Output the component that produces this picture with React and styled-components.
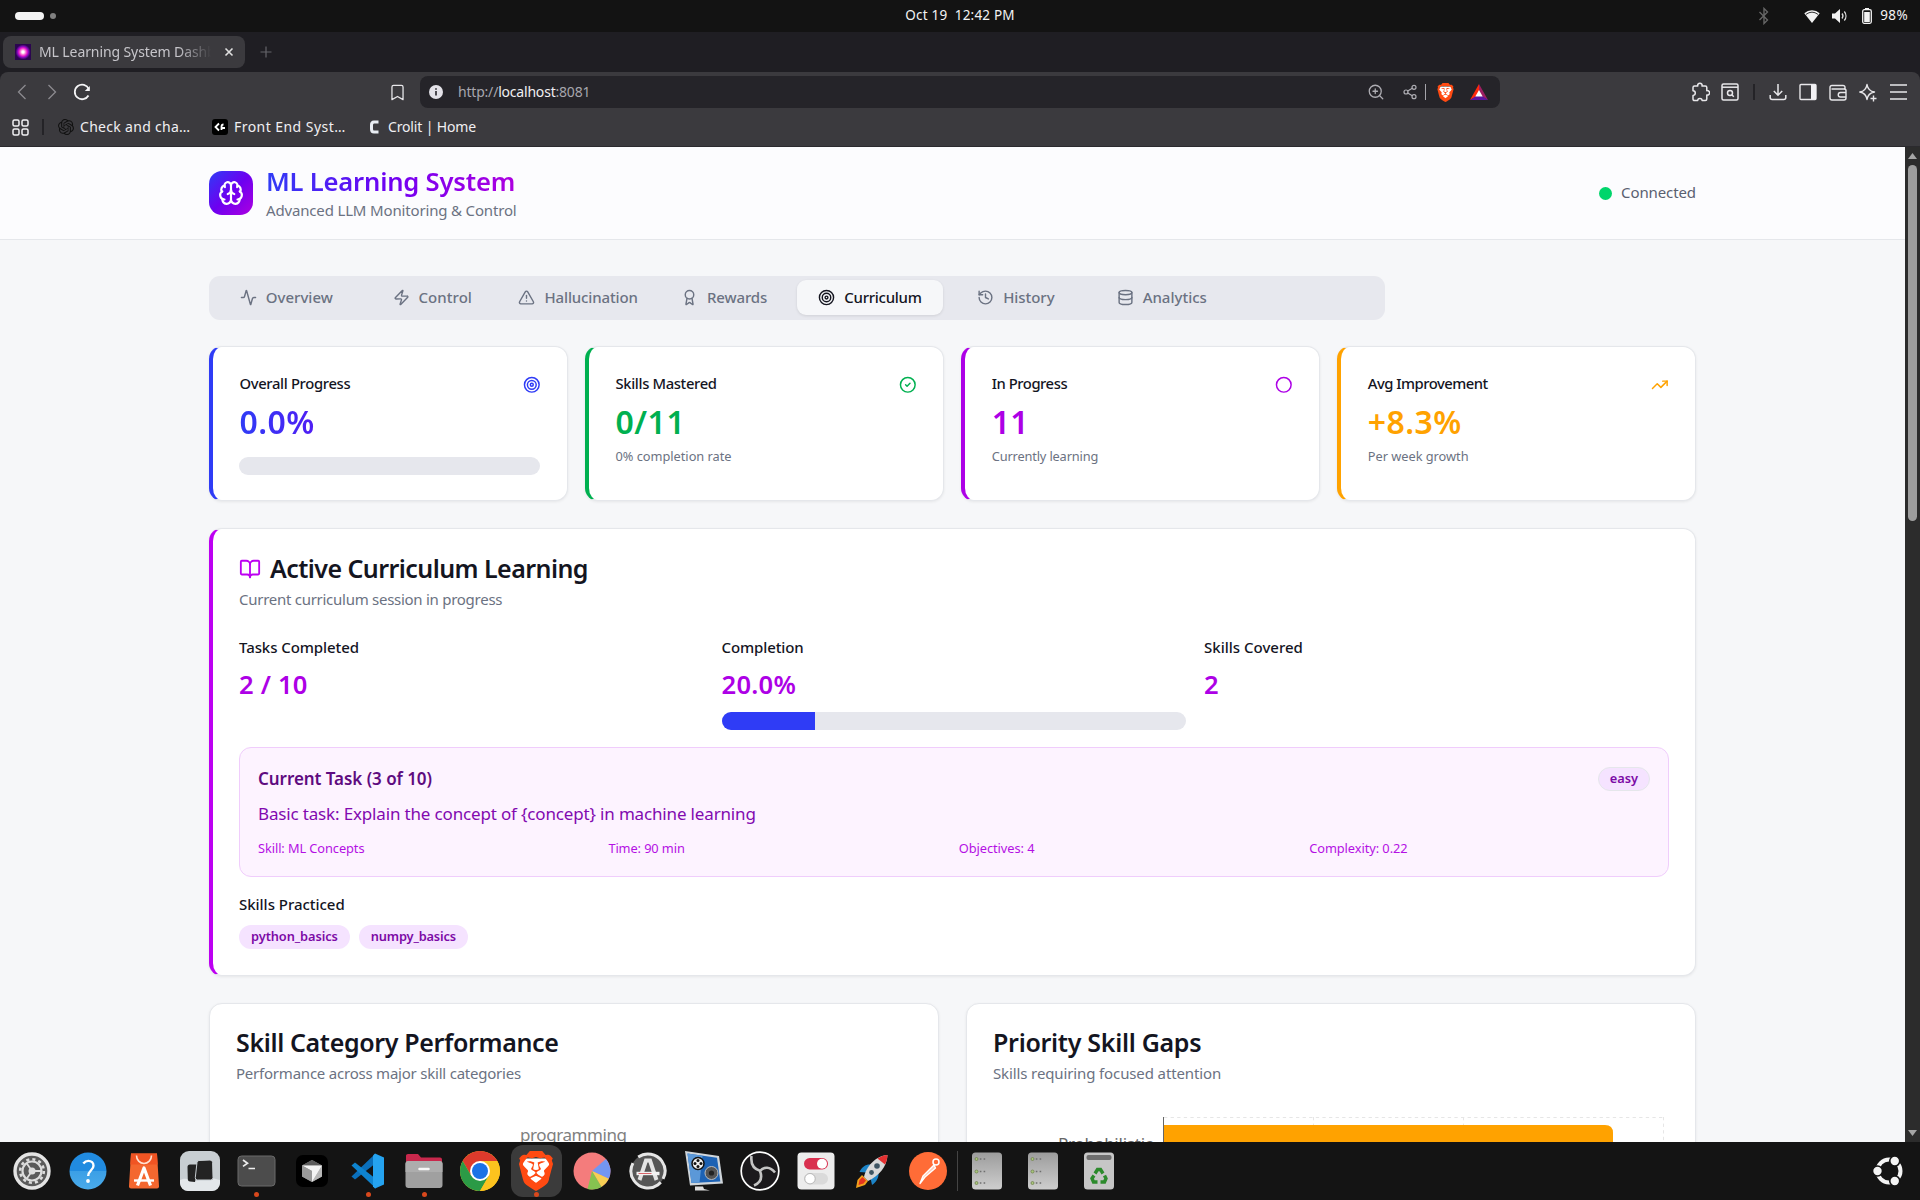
import React from "react";
import styled, { createGlobalStyle, css } from "styled-components";
import {
  Activity, Zap, TriangleAlert, Award, Target, History, Database, CircleCheck, Circle,
  TrendingUp, BookOpen, Brain, Bookmark, ZoomIn, Share2,
} from "lucide-react";
import { SiBrave, SiOpenai } from "react-icons/si";

const c = {
  ink: "#14151f", muted: "#6b7282", line: "#e5e7eb", track: "#e6e7ed", page: "#f6f7f9",
  blue: "#2f3cf6", green: "#00b050", purple: "#ad00e6", fuchsia: "#bd00f2", orange: "#ffa200",
  purple700: "#8209b0", purple900: "#5f0b80", chrome: "#3b3a3e",
};

const Global = createGlobalStyle`
  *, *::before, *::after { box-sizing: border-box; }
  body { margin: 0; overflow: hidden; background: #141414; }
  svg { display: block; flex: none; }
`;

const Screen = styled.div`
  width: 1920px;
  height: 1200px;
  display: flex;
  flex-direction: column;
  overflow: hidden;
  font-family: "Noto Sans", "Open Sans", sans-serif;
  color: ${c.ink};
`;

const Row = styled.div`
  display: flex;
  align-items: center;
`;

const Text = styled.span`
  display: block;
  width: fit-content;
  margin: ${(p) => -(p.$up ?? 1)}px 0 ${(p) => p.$up ?? 1}px;
  white-space: pre;
  font-size: ${(p) => p.$size || 15}px;
  line-height: ${(p) => p.$lh || 22}px;
  font-weight: ${(p) => p.$weight || 400};
  letter-spacing: ${(p) => p.$ls || 0}px;
  color: ${(p) => p.$color || "inherit"};
`;
const Heading = styled(Text).attrs({ $size: 25, $lh: 32, $weight: 600, $up: 1, $color: c.ink })``;
const Small = styled(Text).attrs({ $size: 12.8, $lh: 18 })``;

/* ---------- desktop top bar ---------- */
const TopBar = styled.header`
  height: 32px;
  flex: none;
  display: grid;
  grid-template-columns: 1fr auto 1fr;
  align-items: center;
  background: #131313;
  color: #f2f2f2;
`;
const Workspaces = styled(Row)`
  gap: 6px;
  padding-left: 15px;
  &::before { content: ""; width: 29px; height: 8px; border-radius: 4px; background: #f4f4f4; }
  &::after { content: ""; width: 6px; height: 6px; border-radius: 3px; background: #808080; }
`;
const Tray = styled(Row)`
  justify-content: flex-end;
  padding-right: 12px;
`;
const TrayIcon = styled.span`
  display: flex;
  justify-content: center;
  width: ${(p) => p.$w || 28}px;
  margin-right: ${(p) => p.$after || 0}px;
`;

/* ---------- browser chrome ---------- */
const TabStrip = styled(Row)`
  height: 40px;
  flex: none;
  padding-left: 3px;
  background: #1f1e23;
`;
const BrowserTab = styled(Row)`
  width: 242px;
  height: 32px;
  padding: 0 10px 0 12px;
  border-radius: 8px;
  background: ${c.chrome};
  color: #c6c5ca;
`;
const TabTitle = styled.div`
  width: 174px;
  margin: 0 11px 0 8px;
  overflow: hidden;
  mask-image: linear-gradient(to right, #000 80%, transparent 99%);
`;
const Favicon = styled.span`
  width: 16px;
  height: 16px;
  flex: none;
  background: radial-gradient(circle, #fff 0 10%, #f9d 20%, #e011c8 38%, #8a0abf 48%, #2b0550 66%);
`;
const ChromeArea = styled.div`
  flex: none;
  height: 75px;
  background: #1f1e23;
`;
const ChromePanel = styled.div`
  height: 75px;
  border-radius: 8px 8px 0 0;
  border-bottom: 1px solid #2b2a2e;
  background: ${c.chrome};
`;
const Toolbar = styled(Row)`
  height: 40px;
  padding: 0 7px;
  color: #e8e7ea;
`;
const Slot = styled.span`
  width: ${(p) => p.$w || 30}px;
  height: 32px;
  flex: none;
  display: flex;
  align-items: center;
  justify-content: center;
  color: ${(p) => p.$color || "inherit"};
  margin-left: ${(p) => p.$before || 0}px;
`;
const Divider = styled.span`
  width: ${(p) => p.$w || 2}px;
  height: 16px;
  background: ${(p) => p.$color || "#242327"};
`;
const Address = styled(Row)`
  width: 1080px;
  height: 32px;
  margin-left: 8px;
  padding: 0 6px 0 1px;
  border-radius: 8px;
  background: #252429;
`;
const Url = styled.span`
  margin-left: 7px;
  flex: 1;
  color: #a7a6ad;
  b { font-weight: 400; color: #f0eff2; }
`;
const BookmarkBar = styled(Row)`
  height: 30px;
  padding-left: 5px;
  color: #f0eff2;
`;
const BookmarkItem = styled(Row)`
  gap: 6px;
  width: ${(p) => p.$w}px;
`;
const BookmarkLabel = styled(Text).attrs({ $size: 14, $up: 0 })``;

/* ---------- page ---------- */
const Viewport = styled.div`
  height: 995px;
  flex: none;
  display: flex;
  overflow: hidden;
`;
const Page = styled.div`
  width: 1905px;
  height: 995px;
  overflow: hidden;
  background: ${c.page};
`;
const PageHeader = styled.header`
  height: 93px;
  padding: 0 209px;
  display: flex;
  align-items: center;
  justify-content: space-between;
  border-bottom: 1px solid ${c.line};
  background: #fcfcfe;
`;
const Brand = styled(Row)`
  gap: 13px;
`;
const Logo = styled.div`
  width: 44px;
  height: 44px;
  border-radius: 13px;
  display: grid;
  place-items: center;
  color: #fff;
  background: linear-gradient(135deg, ${c.blue}, #6d00f0 50%, #ad00e0);
`;
const Stack = styled.div`
  display: flex;
  flex-direction: column;
  align-items: flex-start;
`;
const gradientText = css`
  background-clip: text;
  -webkit-background-clip: text;
  color: transparent;
`;
const BrandName = styled.div`
  height: 33px;
  background-image: linear-gradient(to right, ${c.blue}, #7000f2 50%, #ad00e0);
  ${gradientText}
`;
const Status = styled(Row)`
  gap: 9px;
  color: #596070;
  &::before { content: ""; width: 13px; height: 13px; border-radius: 50%; background: #00d56b; }
`;
const Main = styled.main`
  width: 1487px;
  margin: 36px auto 0;
  display: flex;
  flex-direction: column;
  gap: 27px;
`;
const TabList = styled.nav`
  width: 1176px;
  height: 44px;
  margin-bottom: -1px;
  padding: 4px 4.4px 5px;
  display: grid;
  grid-template-columns: repeat(8, 1fr);
  border-radius: 11px;
  background: #e7e8ee;
  color: ${c.muted};
`;
const TabItem = styled(Row)`
  justify-content: center;
  gap: 9px;
  border-radius: 9px;
  ${(p) => p.$active && css`
    background: ${c.page};
    color: ${c.ink};
    box-shadow: 0 1px 3px rgba(0, 0, 0, 0.1);
  `}
`;
const StatGrid = styled.section`
  display: grid;
  grid-template-columns: repeat(4, 1fr);
  gap: 17.6px;
`;
const Card = styled.article`
  display: flex;
  flex-direction: column;
  border: 1px solid ${c.line};
  border-radius: 13px;
  background: #fff;
  box-shadow: 0 1px 3px rgba(0, 0, 0, 0.07);
  ${(p) => p.$accent && css`border-left: 4px solid ${p.$accent};`}
`;
const StatCard = styled(Card)`
  height: 155px;
  padding: 27px 26.400px 0 26.400px;
`;
const StatHead = styled(Row)`
  height: 22px;
  justify-content: space-between;
  color: ${(p) => p.$color};
`;
const StatValue = styled.div`
  height: 40px;
  margin-top: 6px;
  color: ${(p) => p.$color};
  ${(p) => p.$gradient && css`
    background-image: linear-gradient(to right, ${c.blue}, #7000f2 50%, #ad00e0);
    ${gradientText}
  `}
`;
const StatNote = styled.div`
  height: 18px;
  margin-top: 5px;
  color: ${c.muted};
`;
const Track = styled.div`
  height: 17.6px;
  margin-top: ${(p) => p.$top}px;
  border-radius: 9px;
  overflow: hidden;
  background: ${c.track};
`;
const Fill = styled.div`
  width: ${(p) => p.$pct}%;
  height: 100%;
  background: ${c.blue};
`;
const SessionCard = styled(Card)`
  height: 448px;
  padding: 24px 26px 0;
`;
const CardTitle = styled(Row)`
  height: 32px;
  gap: 9px;
  color: ${c.fuchsia};
`;
const CardNote = styled.div`
  height: 22px;
  margin-top: 4px;
  color: ${c.muted};
`;
const Metrics = styled.div`
  display: grid;
  grid-template-columns: repeat(3, 1fr);
  gap: 17.6px;
  margin-top: 26px;
  height: 93px;
`;
const Metric = styled.div`
  display: flex;
  flex-direction: column;
`;
const MetricValue = styled.div`
  height: 35px;
  margin-top: 9px;
  color: ${c.purple};
`;
const TaskBox = styled.section`
  height: 130px;
  margin-top: 17px;
  padding: 19px 18px 0;
  border: 1px solid #f0cdfc;
  border-radius: 12px;
  background: #fdf3ff;
`;
const TaskHead = styled(Row)`
  height: 24px;
  justify-content: space-between;
  color: ${c.purple900};
`;
const TaskText = styled.div`
  height: 26px;
  margin-top: 10px;
  color: ${c.purple700};
`;
const TaskMeta = styled.div`
  display: grid;
  grid-template-columns: repeat(4, 1fr);
  gap: 9.600px;
  margin-top: 13px;
  color: #b410e4;
`;
const Badge = styled.span`
  height: 24px;
  padding: 0 ${(p) => (p.$outline ? 11 : 12)}px;
  display: inline-flex;
  align-items: center;
  border-radius: 12px;
  background: #f5e3ff;
  color: #7c0aa6;
  ${(p) => p.$outline && css`border: 1px solid ${c.line};`}
`;
const SkillsLabel = styled.div`
  height: 22px;
  margin-top: 17px;
`;
const BadgeRow = styled(Row)`
  gap: 9px;
  margin-top: 9px;
`;
const ChartGrid = styled.section`
  display: grid;
  grid-template-columns: 1fr 1fr;
  gap: 27px;
`;
const ChartCard = styled(Card)`
  height: 460px;
  padding: 23px 26px 0;
`;
const ChartSvg = styled.svg`
  margin-top: 26px;
  font-family: "Noto Sans", sans-serif;
  font-size: 17px;
`;
const Scrollbar = styled.div`
  width: 15px;
  height: 995px;
  padding: 6px 3px;
  display: flex;
  flex-direction: column;
  align-items: center;
  background: #2c2c2c;
`;
const Thumb = styled.div`
  width: 9px;
  height: 356px;
  margin: 6px 0 auto;
  border-radius: 5px;
  background: #9e9e9e;
`;

/* ---------- dock ---------- */
const Dock = styled(Row)`
  height: 58px;
  flex: none;
  padding: 0 13px 0 4px;
  background: #141414;
`;
const DockSlot = styled.div`
  position: relative;
  width: 56px;
  height: 58px;
  display: grid;
  place-items: center;
`;
const DockTile = styled.div`
  width: 51px;
  height: 52px;
  display: grid;
  place-items: center;
  border-radius: 12px;
  background: ${(p) => (p.$active ? "#3b3b3b" : "transparent")};
`;
const RunDot = styled.span`
  position: absolute;
  left: 26px;
  bottom: 3px;
  width: 5px;
  height: 5px;
  border-radius: 50%;
  background: #d9481c;
`;
const DockRule = styled.span`
  width: 1px;
  height: 40px;
  margin: 0 1px;
  background: #444;
`;

const I = ({ s = 40, children, ...r }) => (
  <svg width={s} height={s} viewBox="0 0 40 40" fill="none" {...r}>{children}</svg>
);
const BraveMark = ({ s }) => (
  <svg width={s} height={s} viewBox="0 0 24 24">
    <path d="M5 4.5h14l1.300 4-2.500 10L12 22.500 6.200 18.500 3.700 8.500z" fill="#fff" />
    <SiBrave size={24} color="#ff4a12" />
  </svg>
);

const dockIcons = {
  settings: (
    <I><circle cx="20" cy="20" r="17" fill="#5a5a5a" stroke="#e4e4e4" strokeWidth="3.400" />
      <circle cx="20" cy="20" r="9.500" stroke="#dcdcdc" strokeWidth="2.200" />
      <circle cx="20" cy="20" r="11.800" stroke="#dcdcdc" strokeWidth="2.600" strokeDasharray="3.100 3.078" />
      <circle cx="20" cy="20" r="3.500" fill="#dcdcdc" />
      <path d="M20 20L14.500 12M20 20h9M20 20l-5.500 8" stroke="#dcdcdc" strokeWidth="1.800" /></I>
  ),
  help: (
    <I><defs><linearGradient id="hp" x1="0" y1="0" x2="0" y2="1"><stop offset=".5" stopColor="#218be0" /><stop offset=".5" stopColor="#3b9fe6" /><stop offset="1" stopColor="#4aabea" /></linearGradient></defs>
      <circle cx="20" cy="20" r="18.500" fill="url(#hp)" />
      <path d="M15.300 12.500c1.500-1.800 3.200-2.600 5-2.600 3 0 5.200 1.900 5.200 4.800 0 4.300-5.300 5-5.300 10.300" stroke="#fff" strokeWidth="2.400" />
      <circle cx="20" cy="30" r="1.900" fill="#fff" /></I>
  ),
  store: (
    <I><path d="M7 2.500h26l2 33a2 2 0 0 1-2 2H7a2 2 0 0 1-2-2z" fill="#f4672f" /><path d="M7 2.500h26l.7 11H6.300z" fill="#f05423" />
      <path d="M12.500 4.500a7.500 8 0 0 0 15 0" stroke="#ffe0d0" strokeWidth="1.600" />
      <path d="M13.500 34.500L20 17l6.500 17.500" stroke="#fff" strokeWidth="3.200" strokeLinejoin="round" />
      <path d="M10 29.500h20" stroke="#fff" strokeWidth="2.400" /></I>
  ),
  tiles: (
    <I><rect x="0" y="0" width="40" height="40" rx="9" fill="#c8ced2" /><path d="M0 29c8-4 12 3 20 0s12-2 20 0v3a8 8 0 0 1-8 8H8a8 8 0 0 1-8-8z" fill="#e3e7ea" />
      <path d="M7.500 16q0-2.500 2.500-2.500h8L15 31l-5-.5q-2 0-2.200-2z" fill="#232323" />
      <path d="M19 9.500l11-.5q2.500 0 2.600 2.500l.4 15q0 2.500-2.500 2.500H17.500q-2.500 0-2.200-2.500l1.700-15q.2-2 2-2z" fill="#232323" stroke="#c8ced2" strokeWidth="1" /></I>
  ),
  terminal: (
    <I><rect x="2" y="5" width="37" height="30" rx="3.500" fill="#4c4c4c" stroke="#6a6a6a" /><path d="M7 9l4.500 3.200L7 15.400M12.500 17.500h6.500" stroke="#eee" strokeWidth="1.700" /></I>
  ),
  cursor: (
    <I><rect x="4" y="4" width="32" height="32" rx="7" fill="#000" /><path d="M20 9l10 5.500v11L20 31l-10-5.500v-11z" fill="#8a8a8a" /><path d="M10 14.500L20 9l10 5.500z" fill="#5c5c5c" /><path d="M30 14.500v11L20 31z" fill="#b8b8b8" /><path d="M10 14.500h20L20 31V20z" fill="#f4f4f4" /><path d="M10 14.500L20 20v11l-10-5.500z" fill="#9a9a9a" /></I>
  ),
  code: (
    <I><path d="M27 3L3.500 25.500 7 28.500 28 12z" fill="#0a6fbb" /><path d="M3.500 14.500L7 11.500 28 28v9.500z" fill="#0e83cf" /><path d="M27 2.500L36 6.500v27L27 37.500 25 35.500V4.500z" fill="#25a3f0" /></I>
  ),
  files: (
    <I><path d="M2 4.500Q2 3 4 3h10l3 3.500h19q2 0 2 2V18H2z" fill="#c9284c" /><rect x="1.500" y="10" width="37" height="27" rx="3" fill="#a0a0a0" /><path d="M1.500 13q0-3 3-3h31q3 0 3 3v8h-37z" fill="#adadad" /><path d="M15.500 18h9" stroke="#f8f8f8" strokeWidth="2.500" strokeLinecap="round" /></I>
  ),
  chrome: (
    <I><circle cx="20" cy="20" r="20" fill="#fcc31e" /><path d="M20 10h17.300A20 20 0 0 0 2.700 10l8.700 15z" fill="#dd3a2c" /><path d="M2.700 10A20 20 0 0 0 20 40l8.700-15H11.400z" fill="#2b9a46" /><path d="M28.700 25L20 40a20 20 0 0 0 17.300-30H20z" fill="#fcc31e" /><circle cx="20" cy="20" r="10" fill="#fff" /><circle cx="20" cy="20" r="8" fill="#1b72e6" /></I>
  ),
  brave: <BraveMark s={40} />,
  pie: (
    <I><circle cx="20" cy="20" r="18.500" fill="#f47c7c" /><path d="M20 20L34 7.900A18.500 18.500 0 0 1 36.800 27.800z" fill="#7396f2" /><path d="M20 20l16.800 7.800A18.500 18.500 0 0 1 29.500 35.900z" fill="#f7cf54" /><path d="M20 20l9.500 15.900A18.500 18.500 0 0 1 15.500 37.900z" fill="#86c250" /></I>
  ),
  updater: (
    <I><circle cx="20" cy="20" r="17" fill="#565656" stroke="#e6e6e6" strokeWidth="3" strokeDasharray="45 4 49 8.800" transform="rotate(-125 20 20)" /><path d="M11.500 29L18 9.500h4L28.500 29" stroke="#e4e4e4" strokeWidth="4" /><path d="M8.500 22.500h23" stroke="#f2f2f2" strokeWidth="3.400" /><path d="M10.500 22.500h13" stroke="#d8646a" strokeWidth="1" /></I>
  ),
  media: (
    <I><path d="M1 0l34 5 4 27.500-33 2z" fill="#cfd5da" /><path d="M3.500 2.500l29.500 4.300 3.300 23.600-28.800 1.600z" fill="#1d62b4" /><path d="M3.500 2.500l15 2.200-3 26.800-8 .5z" fill="#5b98d8" /><circle cx="14" cy="12.500" r="6" fill="#eee" stroke="#111" strokeWidth="1.500" /><g fill="#111"><circle cx="14" cy="9.500" r="1.500" /><circle cx="11" cy="12.500" r="1.500" /><circle cx="17" cy="12.500" r="1.500" /><circle cx="14" cy="15.500" r="1.500" /></g><circle cx="27.500" cy="22" r="6.500" fill="#555" stroke="#bbb" /><circle cx="27.500" cy="22" r="2.600" fill="#222" /><path d="M11 35.500h8l1 2.500 6 1.500H11z" fill="#ddd" /></I>
  ),
  obs: (
    <I><circle cx="20" cy="20" r="18.800" fill="#1b191c" stroke="#fff" strokeWidth="1.700" /><path d="M11.500 5c-1 8 2 13 9 15M35 21.500c-5-6-11-6-15-1.500M14 34.500c7-3 8.500-8 6-14.500" stroke="#c4c4c4" strokeWidth="2.600" /></I>
  ),
  toggles: (
    <I><rect x="1.500" y="1.500" width="37" height="37" rx="4" fill="#ececec" /><rect x="8" y="7" width="24" height="11.500" rx="5.700" fill="#d9304f" /><circle cx="26" cy="12.700" r="5" fill="#fff" /><rect x="8" y="22" width="24" height="11.500" rx="5.700" fill="#dadada" /><circle cx="14" cy="27.700" r="5.200" fill="#fff" stroke="#aaa" strokeWidth=".8" /></I>
  ),
  rocket: (
    <I><path d="M19 13.500c-5-.5-9 2-11.500 7.500l7 .5zM26.500 21c.5 5-1.500 9.500-6.500 13l-1.500-7z" fill="#1c84c8" /><path d="M10 24l6 6-3 4-9 3 1.500-8z" fill="#f2a21d" /><path d="M10.500 26l3.500 3.500-2.500 3-5 1.500 1-5z" fill="#e5341f" /><path d="M12 26C14 16 23 5 35.500 4c-.5 12-9 21-19.500 26z" fill="#d9d9d9" /><path d="M25.500 7.500C28.500 5.500 32 4.200 35.500 4c-.1 3.500-1 6.700-2.500 9.500z" fill="#e43030" /><circle cx="25" cy="15" r="2.800" fill="#3e5563" /><circle cx="19.500" cy="21.500" r="2.400" fill="#3e5563" /></I>
  ),
  postman: (
    <I><circle cx="20" cy="20" r="19" fill="#ff6c37" /><circle cx="28" cy="11" r="3" stroke="#fff" strokeWidth="1.500" /><path d="M26 14L15 25l-3 7.500 5-6.500 10.500-9z" fill="#ffc9b5" stroke="#fff" strokeWidth="1.400" strokeLinejoin="round" /></I>
  ),
  server: (
    <I><defs><linearGradient id="sv" x1="0" y1="0" x2="0" y2="1"><stop stopColor="#9c9c9c" /><stop offset="1" stopColor="#cecece" /></linearGradient></defs>
      <rect x="5" y="1.500" width="30" height="37" rx="3.500" fill="url(#sv)" />
      {[8, 20.500, 32].map((y) => <g key={y}><circle cx="9.500" cy={y} r="1.500" fill="#a8c77a" stroke="#71804f" strokeWidth=".8" /><path d={`M12.800 ${y}h1.600M16.600 ${y}h1.600`} stroke="#6f6f6f" strokeWidth="1.600" /></g>)}</I>
  ),
  trash: (
    <I><rect x="5" y="1.500" width="30" height="37" rx="3.500" fill="#c6c6c6" /><rect x="7.500" y="4" width="25" height="5" rx="2" fill="#6e6e6e" /><g stroke="#2c8a2c" strokeWidth="3.400"><path d="M16 22.500l2.500-4h3l2.500 4" /><path d="M25.500 24.500l1.500 3-1.500 3.500h-4" /><path d="M18.500 31h-4l-1.500-3.500 2-3" /></g></I>
  ),
};

const dockItems = [
  ["settings"], ["help"], ["store"], ["tiles"], ["terminal", true], ["cursor"], ["code", true],
  ["files", true], ["chrome"], ["brave", true, true], ["pie"], ["updater"], ["media"], ["obs"],
  ["toggles"], ["rocket"], ["postman"],
];

const DockItem = ({ name, running, active }) => (
  <DockSlot>
    <DockTile $active={active}>{dockIcons[name]}</DockTile>
    {running && <RunDot />}
  </DockSlot>
);

const tabs = [
  ["Overview", Activity, 0], ["Control", Zap, 0.05], ["Hallucination", TriangleAlert, -0.13], ["Rewards", Award, -0.13],
  ["Curriculum", Target, -0.28], ["History", History, -0.05], ["Analytics", Database, 0],
];

const stats = [
  { label: "Overall Progress", ls: -0.33, value: "0.0%", vls: 0.5, icon: Target, color: c.blue, bar: true },
  { label: "Skills Mastered", ls: -0.36, value: "0/11", vls: 0.5, icon: CircleCheck, color: c.green, note: "0% completion rate", nls: -0.03 },
  { label: "In Progress", ls: -0.45, value: "11", vls: 0.3, icon: Circle, color: c.purple, note: "Currently learning", nls: -0.15 },
  { label: "Avg Improvement", ls: -0.5, value: "+8.3%", vls: 0.4, icon: TrendingUp, color: c.orange, note: "Per week growth", nls: -0.03 },
];

export default function App() {
  return (
    <Screen>
      <Global />
      <TopBar>
        <Workspaces />
        <Text $size={13.5} $ls={0.2}>{"Oct 19  12:42 PM"}</Text>
        <Tray>
          <TrayIcon $after={20}>
            <svg width="12" height="18" viewBox="0 0 12 18" fill="none" stroke="#666" strokeWidth="1.400"><path d="M1.500 5l8 8L6 16.500V1.500L9.500 5l-8 8" /></svg>
          </TrayIcon>
          <TrayIcon>
            <svg width="16" height="14" viewBox="0 0 16 14"><path d="M8 14L.3 4.300a11.500 11.500 0 0 1 15.400 0z" fill="#f2f2f2" /><path d="M2 4.600a10 10 0 0 1 12 0" fill="none" stroke="#333" strokeWidth="1" transform="translate(0 .8)" /></svg>
          </TrayIcon>
          <TrayIcon>
            <svg width="16" height="14" viewBox="0 0 16 14"><path d="M0 4.500h3L8 0v14L3 9.500H0z" fill="#f2f2f2" /><path d="M10 4.500a4 4 0 0 1 0 5M12.300 2.500a7 7 0 0 1 0 9" fill="none" stroke="#ddd" strokeWidth="1.300" /></svg>
          </TrayIcon>
          <TrayIcon $w={26}>
            <svg width="10" height="16" viewBox="0 0 10 16"><rect x="3" y="0" width="4" height="2" fill="#f2f2f2" /><rect x=".7" y="1.700" width="8.600" height="13.600" rx="1.500" fill="none" stroke="#f2f2f2" strokeWidth="1.300" /><rect x="2.200" y="4" width="5.600" height="10" fill="#f2f2f2" /></svg>
          </TrayIcon>
          <Text $size={13.5} $ls={0.35}>98%</Text>
        </Tray>
      </TopBar>

      <TabStrip>
        <BrowserTab>
          <Favicon />
          <TabTitle><Text $size={14} $ls={-0.1} $up={0}>ML Learning System Dashboard</Text></TabTitle>
          <svg width="10" height="10" viewBox="0 0 10 10" stroke="#e0e0e0" strokeWidth="1.600"><path d="M1.500 1.500l7 7M8.500 1.500l-7 7" /></svg>
        </BrowserTab>
        <Slot $before={6} $color="#65646a">
          <svg width="12" height="12" viewBox="0 0 12 12" stroke="currentColor" strokeWidth="1.200"><path d="M6 .5v11M.5 6h11" /></svg>
        </Slot>
      </TabStrip>

      <ChromeArea>
        <ChromePanel>
          <Toolbar>
            <Slot $color="#8c8b90"><svg width="10" height="16" viewBox="0 0 10 16" fill="none" stroke="currentColor" strokeWidth="1.300"><path d="M8.500 1l-7 7 7 7" /></svg></Slot>
            <Slot $color="#8c8b90"><svg width="10" height="16" viewBox="0 0 10 16" fill="none" stroke="currentColor" strokeWidth="1.300"><path d="M1.500 1l7 7-7 7" /></svg></Slot>
            <Slot><svg width="18" height="18" viewBox="0 0 18 18" fill="none" stroke="#f4f4f6" strokeWidth="1.800"><path d="M15.500 12.500A7.300 7.300 0 1 1 15.800 6" /><path d="M16.800 3v5h-5z" fill="#f4f4f6" stroke="none" /></svg></Slot>
            <Slot $before={285}><Bookmark size={19} strokeWidth={1.6} /></Slot>
            <Address>
              <Slot><svg width="14" height="14" viewBox="0 0 14 14"><circle cx="7" cy="7" r="7" fill="#e3e2e8" /><path d="M7 6v4.500M7 3.300v1.500" stroke="#252429" strokeWidth="1.600" /></svg></Slot>
              <Url><Text $size={14} $ls={-0.2} $up={0}>http://<b>localhost</b>:8081</Text></Url>
              <Slot $color="#aeadb3"><ZoomIn size={18} strokeWidth={1.7} /></Slot>
              <Slot $before={4} $color="#aeadb3"><Share2 size={16} strokeWidth={1.8} /></Slot>
              <Divider $w={1.5} $color="#a5a4aa" />
              <Slot $before={4}><BraveMark s={19} /></Slot>
              <Slot $before={4}><svg width="18" height="16" viewBox="0 0 18 16"><path d="M9 0L0 16l9-5z" fill="#ff2a0c" /><path d="M9 0l9 16-9-5z" fill="#9e1f63" /><path d="M0 16h18l-9-6z" fill="#5c16a0" /><path d="M9 6l-3.700 6.500h7.400z" fill="#fff" /></svg></Slot>
            </Address>
            <Slot $before={185}><svg width="19" height="20" viewBox="0 0 19 20" fill="none" stroke="currentColor" strokeWidth="1.500" strokeLinejoin="round"><path d="M2 5.500Q2 4 3.500 4h3.300a2.200 2.200 0 1 1 4.200 0h3.300q1.500 0 1.500 1.500v3.200a2.200 2.200 0 1 1 0 4.200v4.200q0 1.500-1.500 1.500h-3.200a2.200 2.200 0 0 0-4.400 0H3.500Q2 18.600 2 17.100v-3.700a2.300 2.300 0 0 0 0-4.600z" /></svg></Slot>
            <Slot><svg width="18" height="18" viewBox="0 0 18 18" fill="none" stroke="currentColor" strokeWidth="1.500"><rect x="1" y="1" width="16" height="16" rx="1.500" /><path d="M1 4.200h16" /><circle cx="9" cy="10" r="2.500" /><path d="M11 12l1.800 1.800" /></svg></Slot>
            <Slot $w={18}><Divider /></Slot>
            <Slot><svg width="18" height="18" viewBox="0 0 18 18" fill="none" stroke="currentColor" strokeWidth="1.500"><path d="M9 1v11M4.800 8L9 12.200 13.200 8M1.200 12v2.500q0 2 2 2h11.600q2 0 2-2V12" /></svg></Slot>
            <Slot><svg width="18" height="18" viewBox="0 0 18 18"><rect x="1" y="1.500" width="16" height="15" rx="1" fill="none" stroke="currentColor" strokeWidth="1.400" /><rect x="12" y="1.500" width="5" height="15" fill="#f2f1f4" /></svg></Slot>
            <Slot><svg width="18" height="17" viewBox="0 0 18 17" fill="none" stroke="currentColor" strokeWidth="1.400"><path d="M16 5V3.500q0-2-2-2H3q-2 0-2 2V14q0 2 2 2h12q2 0 2-2V6.500Q17 5 15 5H2.500" /><path d="M17 8.500h-5.500a2.200 2.200 0 0 0 0 4.500H17" /></svg></Slot>
            <Slot><svg width="18" height="19" viewBox="0 0 18 19" fill="none" stroke="currentColor" strokeWidth="1.400"><path d="M8 1.500q1 6.500 7.500 7.500-6.500 1-7.500 7.500Q7 10 .8 9 7 8 8 1.500z" strokeLinejoin="round" /><path d="M14.500 12.500v6M11.500 15.500h6" /></svg></Slot>
            <Slot><svg width="17" height="16" viewBox="0 0 17 16" stroke="currentColor" strokeWidth="1.700"><path d="M0 1h17M0 8h17M0 15h17" /></svg></Slot>
          </Toolbar>
          <BookmarkBar>
            <Slot><svg width="17" height="17" viewBox="0 0 17 17" fill="none" stroke="currentColor" strokeWidth="1.500"><rect x="1" y="1" width="6" height="6" rx="1.500" /><rect x="10" y="1" width="6" height="6" rx="1.500" /><rect x="1" y="10" width="6" height="6" rx="1.500" /><rect x="10" y="10" width="6" height="6" rx="1.500" /></svg></Slot>
            <Slot $w={16}><Divider /></Slot>
            <Slot $w={7} />
            <BookmarkItem $w={154}><SiOpenai size={16} color="#111" /><BookmarkLabel $ls={0.3}>Check and cha…</BookmarkLabel></BookmarkItem>
            <BookmarkItem $w={154}>
              <svg width="16" height="16" viewBox="0 0 16 16"><rect width="16" height="16" rx="3" fill="#000" /><path d="M7 4.500L3.500 8 7 11.500M9.500 11V7.500q0-2 2-2M9.500 9H13" fill="none" stroke="#fff" strokeWidth="1.800" /></svg>
              <BookmarkLabel $ls={0.45}>Front End Syst…</BookmarkLabel>
            </BookmarkItem>
            <BookmarkItem $w={120}>
              <svg width="16" height="16" viewBox="0 0 16 16"><path d="M12.500 3H8Q5.500 3 5.500 6v4q0 3 2.500 3h4.500" fill="none" stroke="#e8ecf2" strokeWidth="3" /></svg>
              <BookmarkLabel $ls={-0.15}>Crolit | Home</BookmarkLabel>
            </BookmarkItem>
          </BookmarkBar>
        </ChromePanel>
      </ChromeArea>

      <Viewport>
        <Page>
          <PageHeader>
            <Brand>
              <Logo><Brain size={26} strokeWidth={2} /></Logo>
              <Stack>
                <BrandName><Text $size={25.6} $lh={32} $weight={600} $ls={-0.2} $up={0}>ML Learning System</Text></BrandName>
                <Text $ls={-0.16} $up={0} $color={c.muted}>Advanced LLM Monitoring &amp; Control</Text>
              </Stack>
            </Brand>
            <Status><Text $ls={-0.1}>Connected</Text></Status>
          </PageHeader>

          <Main>
            <TabList>
              {tabs.map(([label, Icon, ls]) => (
                <TabItem key={label} $active={label === "Curriculum"}>
                  <Icon size={17} strokeWidth={2} />
                  <Text $ls={ls} $weight={500}>{label}</Text>
                </TabItem>
              ))}
            </TabList>

            <StatGrid>
              {stats.map(({ label, ls, value, vls, icon: Icon, color, bar, note, nls }) => (
                <StatCard key={label} $accent={color}>
                  <StatHead $color={color}>
                    <Text $ls={ls} $size={14.8} $weight={500} $up={2} $color={c.ink}>{label}</Text>
                    <Icon size={17.6} strokeWidth={2} />
                  </StatHead>
                  <StatValue $color={color} $gradient={bar}><Text $ls={vls} $size={32} $lh={40} $weight={650} $up={0}>{value}</Text></StatValue>
                  {bar ? <Track $top={15} /> : <StatNote><Small $ls={nls} $up={0}>{note}</Small></StatNote>}
                </StatCard>
              ))}
            </StatGrid>

            <SessionCard $accent={c.fuchsia}>
              <CardTitle>
                <BookOpen size={22} strokeWidth={2} />
                <Heading $ls={-0.56}>Active Curriculum Learning</Heading>
              </CardTitle>
              <CardNote><Text $ls={-0.27}>Current curriculum session in progress</Text></CardNote>
              <Metrics>
                <Metric>
                  <Text $ls={-0.08} $weight={500}>Tasks Completed</Text>
                  <MetricValue><Text $ls={0.2} $size={25.6} $lh={35} $weight={650}>2 / 10</Text></MetricValue>
                </Metric>
                <Metric>
                  <Text $ls={-0.12} $weight={500}>Completion</Text>
                  <MetricValue><Text $ls={0.25} $size={25.6} $lh={35} $weight={650}>20.0%</Text></MetricValue>
                  <Track $top={9}><Fill $pct={20} /></Track>
                </Metric>
                <Metric>
                  <Text $weight={500}>Skills Covered</Text>
                  <MetricValue><Text $size={25.6} $lh={35} $weight={650}>2</Text></MetricValue>
                </Metric>
              </Metrics>
              <TaskBox>
                <TaskHead>
                  <Text $size={17} $lh={24} $weight={600} $ls={-0.05} $up={0}>Current Task (3 of 10)</Text>
                  <Badge $outline><Text $size={12.8} $lh={20} $weight={600}>easy</Text></Badge>
                </TaskHead>
                <TaskText><Text $size={17} $lh={26} $ls={-0.16} $up={0}>{"Basic task: Explain the concept of {concept} in machine learning"}</Text></TaskText>
                <TaskMeta>
                  <Small $ls={-0.08}>Skill: ML Concepts</Small>
                  <Small $ls={-0.1}>Time: 90 min</Small>
                  <Small $ls={-0.06}>Objectives: 4</Small>
                  <Small $ls={-0.06}>Complexity: 0.22</Small>
                </TaskMeta>
              </TaskBox>
              <SkillsLabel><Text $weight={500} $ls={-0.03}>Skills Practiced</Text></SkillsLabel>
              <BadgeRow>
                <Badge><Text $ls={-0.07} $size={12.8} $lh={20} $weight={600}>python_basics</Text></Badge>
                <Badge><Text $ls={-0.16} $size={12.8} $lh={20} $weight={600}>numpy_basics</Text></Badge>
              </BadgeRow>
            </SessionCard>

            <ChartGrid>
              <ChartCard>
                <CardTitle><Heading $ls={-0.36}>Skill Category Performance</Heading></CardTitle>
                <CardNote><Text $ls={-0.22}>Performance across major skill categories</Text></CardNote>
                <ChartSvg width="676" height="300">
                  <text x="284" y="30" textLength="107" fill="#808080">programming</text>
                </ChartSvg>
              </ChartCard>
              <ChartCard>
                <CardTitle><Heading $ls={-0.3}>Priority Skill Gaps</Heading></CardTitle>
                <CardNote><Text $ls={-0.12}>Skills requiring focused attention</Text></CardNote>
                <ChartSvg width="676" height="300">
                  <g stroke="#e6e6e6" strokeDasharray="3.300 3.300"><path d="M171 6.500h499M320.500 6v290M470.500 6v290M670.500 6v290" /></g>
                  <path d="M171 14h441q8 0 8 8v80H171z" fill={c.orange} />
                  <path d="M170.500 6v290" stroke="#666" />
                  <text x="65" y="39" textLength="95" fill="#666">Probabilistic</text>
                </ChartSvg>
              </ChartCard>
            </ChartGrid>
          </Main>
        </Page>
        <Scrollbar>
          <svg width="9" height="6" viewBox="0 0 9 6"><path d="M4.500 0L9 6H0z" fill="#a5a5a5" /></svg>
          <Thumb />
          <svg width="9" height="6" viewBox="0 0 9 6"><path d="M4.500 6L0 0h9z" fill="#a5a5a5" /></svg>
        </Scrollbar>
      </Viewport>

      <Dock>
        {dockItems.map(([name, running, active]) => <DockItem key={name} name={name} running={running} active={active} />)}
        <DockRule />
        <DockItem name="server" />
        <DockItem name="server" />
        <DockItem name="trash" />
        <Slot $before={747}>
          <svg width="32" height="32" viewBox="0 0 32 32" fill="none" stroke="#f4f4f4"><circle cx="16" cy="16" r="11.500" strokeWidth="4" /><g fill="#f4f4f4" stroke="#141414" strokeWidth="1.600"><circle cx="4.500" cy="16" r="5" /><circle cx="21.750" cy="6.040" r="5" /><circle cx="21.750" cy="25.960" r="5" /></g></svg>
        </Slot>
      </Dock>
    </Screen>
  );
}
